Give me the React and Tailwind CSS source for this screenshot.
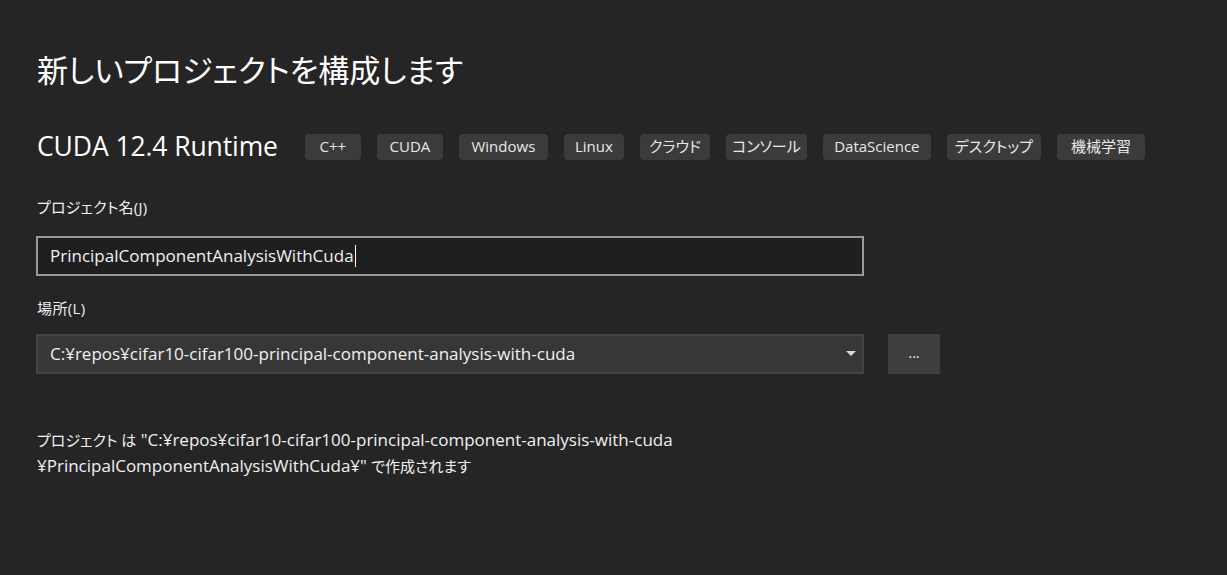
import React from 'react';

const tags = [
  { label: 'C++', w: 'w-[56px]' },
  { label: 'CUDA', w: 'w-[66px]' },
  { label: 'Windows', w: 'w-[89px]' },
  { label: 'Linux', w: 'w-[60px]' },
  { label: 'クラウド', w: 'w-[70px]' },
  { label: 'コンソール', w: 'w-[81px]' },
  { label: 'DataScience', w: 'w-[108px]' },
  { label: 'デスクトップ', w: 'w-[94px]' },
  { label: '機械学習', w: 'w-[88px]' },
];

const font = { fontFamily: '"Open Sans", "Noto Sans CJK JP", sans-serif' };

// 日本語部分は少し小さめ（Yu Gothic UI 風にプロポーショナル）
const Jp = ({ children }) => <span className="text-[15px]">{children}</span>;

export default function App() {
  return (
    <div
      className="w-[1227px] h-[575px] bg-[#252526] text-[#f1f1f1] px-[37px] pt-[46px] overflow-hidden [font-feature-settings:'palt']"
      style={font}
    >
      <h1 className="text-[31px] leading-[48px] font-normal text-white">新しいプロジェクトを構成します</h1>

      <div className="flex items-center mt-[37px]">
        <h2 className="text-[26.5px] leading-[30px] text-white mr-[27px] tracking-[-0.1px]">CUDA 12.4 Runtime</h2>
        <div className="flex gap-[16px] pt-[1px]">
          {tags.map(t => (
            <span
              key={t.label}
              className={`${t.w} h-[26px] flex items-center justify-center rounded-[4px] bg-[#3b3b3c] text-[15px] text-[#e8e8e8] whitespace-nowrap`}
            >
              {t.label}
            </span>
          ))}
        </div>
      </div>

      <div className="mt-[36px] text-[15px] leading-[20px] text-[#f1f1f1] tracking-[0.2px]">プロジェクト名(J)</div>
      <div className="mt-[19px] w-[828px] h-[40px] border-2 border-[#9a9a9a] bg-[#1f1f1f] flex items-center pl-[12px] -ml-px">
        <span className="text-[17px] text-[#f1f1f1]">PrincipalComponentAnalysisWithCuda</span>
        <span className="w-px h-[22px] bg-white ml-px"></span>
      </div>

      <div className="mt-[22px] text-[15px] leading-[20px] text-[#f1f1f1] tracking-[0.4px]">場所(L)</div>
      <div className="mt-[16px] flex items-center -ml-px">
        <div className="w-[828px] h-[40px] border-2 border-[#434343] bg-[#373737] flex items-center justify-between pl-[12px] pr-[4px]">
          <span className="text-[17px] text-[#f1f1f1]">C:¥repos¥cifar10-cifar100-principal-component-analysis-with-cuda</span>
          <svg width="10" height="6" viewBox="0 0 10 6" className="mr-[2px]">
            <path d="M0 0 L10 0 L5 5 Z" fill="#d8d8d8" />
          </svg>
        </div>
        <button className="ml-[24px] w-[52px] h-[40px] bg-[#3e3e3e] text-[14px] text-[#f1f1f1] leading-none pb-[2px]">...</button>
      </div>

      <div className="mt-[53px] text-[17px] leading-[26px] text-[#f1f1f1]">
        <div><Jp>プロジェクト は</Jp> "C:¥repos¥cifar10-cifar100-principal-component-analysis-with-cuda</div>
        <div>¥PrincipalComponentAnalysisWithCuda¥" <Jp>で作成されます</Jp></div>
      </div>
    </div>
  );
}
